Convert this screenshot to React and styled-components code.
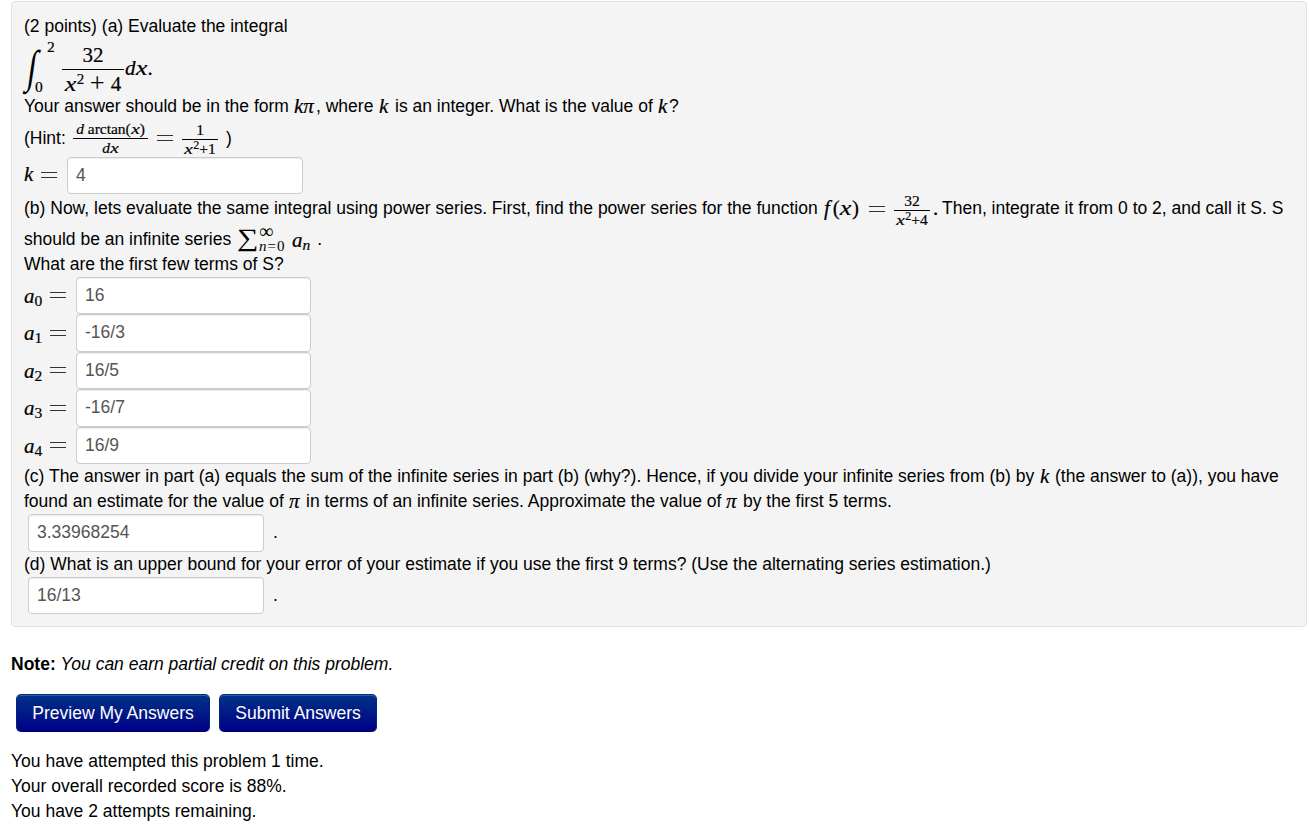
import React from "react";
import styled, { createGlobalStyle } from "styled-components";

const GlobalStyle = createGlobalStyle`
  * {
    box-sizing: border-box;
  }
  body {
    margin: 0;
    background: #fff;
    color: #000;
    font-family: "Liberation Sans", Arial, sans-serif;
    font-size: 17.5px;
    line-height: 25px;
  }
`;

const terms = [
  { n: 0, value: "16" },
  { n: 1, value: "-16/3" },
  { n: 2, value: "16/5" },
  { n: 3, value: "-16/7" },
  { n: 4, value: "16/9" },
];

export default function App() {
  return (
    <Page>
      <GlobalStyle />
      <Problem>
        <Line>(2 points) (a) Evaluate the integral</Line>

        <Line $h={55}>
          <IntegralSign>∫</IntegralSign>
          <Limits>
            <span>2</span>
            <span>0</span>
          </Limits>
          <BigFraction>
            <Num>32</Num>
            <Den>
              <Var>x</Var>
              <Sup>2</Sup>
              <Plus>+</Plus>4
            </Den>
          </BigFraction>
          <Math $l={1} $t={4}>
            <i>d</i>
            <Var>x</Var>.
          </Math>
        </Line>

        <Line>
          <Text $w={270}>Your answer should be in the form</Text>
          <Math $w={22}>
            <i>kπ</i>
          </Math>
          <Text $w={63}>, where</Text>
          <Math $w={16}>
            <i>k</i>
          </Math>
          <Text $w={263}>is an integer. What is the value of</Text>
          <Math $w={11}>
            <i>k</i>
          </Math>
          ?
        </Line>

        <Line $h={38}>
          <Text $w={49}>(Hint:</Text>
          <Fraction $w={75}>
            <Num>
              <i>d</i> arctan(<Var>x</Var>)
            </Num>
            <Den>
              <i>d</i>
              <Var>x</Var>
            </Den>
          </Fraction>
          <Equals $l={9} $r={9} />
          <Fraction $w={36} $t={3}>
            <Num>1</Num>
            <Den>
              <Var>x</Var>
              <Sup $small>2</Sup>+1
            </Den>
          </Fraction>
          <Text $l={8}>)</Text>
        </Line>

        <Line $h={36.5}>
          <Math $w={17}>
            <i>k</i>
          </Math>
          <Equals $r={10} />
          <Answer defaultValue="4" />
        </Line>

        <Line $h={30} $b={3}>
          <Text $w={799}>
            (b) Now, lets evaluate the same integral using power series. First,
            find the power series for the function
          </Text>
          <Math $w={46}>
            <Func>f</Func>(<Var>x</Var>)
          </Math>
          <Equals $r={9} />
          <Fraction $w={36} $t={3}>
            <Num>32</Num>
            <Den>
              <Var>x</Var>
              <Sup $small>2</Sup>+4
            </Den>
          </Fraction>
          <Math $l={3} $w={9}>
            .
          </Math>
          <Text>Then, integrate it from 0 to 2, and call it S. S</Text>
        </Line>

        <Line>
          <Text $w={213}>should be an infinite series</Text>
          <SumSign>∑</SumSign>
          <SumLimits>
            <Infinity>∞</Infinity>
            <LowerLimit>
              <i>n</i>=0
            </LowerLimit>
          </SumLimits>
          <Math $t={2}>
            <i>a</i>
            <Sub>
              <i>n</i>
            </Sub>
          </Math>
          <Text $l={7}>.</Text>
        </Line>
        <Line>What are the first few terms of S?</Line>

        {terms.map((term) => (
          <Line $h={37.5} key={term.n}>
            <Math $w={26} $t={2}>
              <i>a</i>
              <Sub>{term.n}</Sub>
            </Math>
            <Equals $r={10} />
            <Answer $w={235} defaultValue={term.value} />
          </Line>
        ))}

        <Line>
          <Text $w={1016}>
            (c) The answer in part (a) equals the sum of the infinite series in
            part (b) (why?). Hence, if you divide your infinite series from (b)
            by
          </Text>
          <Math $w={15}>
            <i>k</i>
          </Math>
          <Text>(the answer to (a)), you have</Text>
        </Line>
        <Line>
          <Text $w={265}>found an estimate for the value of</Text>
          <Math $w={17}>
            <i>π</i>
          </Math>
          <Text $w={420}>
            in terms of an infinite series. Approximate the value of
          </Text>
          <Math $w={17}>
            <i>π</i>
          </Math>
          <Text>by the first 5 terms.</Text>
        </Line>
        <Line $h={37.5}>
          <Answer $l={4} defaultValue="3.33968254" />
          <Text $l={9}>.</Text>
        </Line>

        <Line>
          (d) What is an upper bound for your error of your estimate if you use
          the first 9 terms? (Use the alternating series estimation.)
        </Line>
        <Line $h={37.5}>
          <Answer $l={4} defaultValue="16/13" />
          <Text $l={9}>.</Text>
        </Line>
      </Problem>

      <Note>
        <b>Note:</b> <i>You can earn partial credit on this problem.</i>
      </Note>

      <Buttons>
        <Button $w={194}>Preview My Answers</Button>
        <Button $w={158}>Submit Answers</Button>
      </Buttons>

      <Score>
        You have attempted this problem 1 time.
        <br />
        Your overall recorded score is 88%.
        <br />
        You have 2 attempts remaining.
      </Score>
    </Page>
  );
}

const Page = styled.div`
  width: 1310px;
  height: 836px;
  padding: 1px 3px 0 11px;
  overflow: hidden;
`;
const Problem = styled.section`
  height: 626px;
  padding: 12px;
  background: #f4f4f4;
  border: 1px solid #e2e2e2;
  border-radius: 4px;
`;
const Line = styled.div`
  display: flex;
  align-items: center;
  height: ${(p) => p.$h || 25}px;
  margin-bottom: ${(p) => p.$b || 0}px;
  white-space: nowrap;
`;
const Text = styled.span`
  flex: none;
  width: ${(p) => (p.$w ? p.$w + "px" : "auto")};
  margin-left: ${(p) => p.$l || 0}px;
`;
const Math = styled.span`
  flex: none;
  width: ${(p) => (p.$w ? p.$w + "px" : "auto")};
  margin-top: ${(p) => p.$t || -1}px;
  margin-left: ${(p) => p.$l || 0}px;
  font-family: "Liberation Serif", "Times New Roman", serif;
  font-size: 21px;
  line-height: 25px;
  -webkit-text-stroke: 0.2px #000;
`;
/* wide italic letter */
const Var = styled.i`
  display: inline-block;
  margin: 0 0.07em 0 0.06em;
  line-height: 1;
  transform: scaleX(1.25);
`;
const Func = styled.i`
  padding: 0 3px 0 1px;
`;
const Plus = styled.span`
  display: inline-block;
  margin: 0 7px;
  font-size: 22px;
  line-height: 1;
  -webkit-text-stroke: 0;
  transform: scale(1.2);
`;
const Sup = styled.sup`
  font-size: ${(p) => (p.$small ? 12 : 15)}px;
  line-height: 0;
  vertical-align: ${(p) => (p.$small ? 5 : 7)}px;
`;
const Sub = styled.sub`
  font-size: 15.5px;
  line-height: 0;
  vertical-align: -3px;
`;
const IntegralSign = styled.span`
  width: 17px;
  font-family: "Liberation Serif", serif;
  font-size: 38px;
  line-height: 50px;
  transform: translate(3px, -1px) skewX(-8deg) scale(0.85, 1.2);
`;
const Limits = styled.span`
  display: flex;
  flex-direction: column;
  justify-content: space-between;
  width: 21px;
  height: 55px;
  font-family: "Liberation Serif", serif;
  font-size: 15.5px;
  line-height: 15px;
  -webkit-text-stroke: 0.2px #000;
  span:first-child {
    padding-left: 6px;
  }
  span:last-child {
    margin-left: -6px;
  }
`;
const Fraction = styled.span`
  display: flex;
  flex: none;
  flex-direction: column;
  align-items: center;
  width: ${(p) => p.$w}px;
  margin-top: ${(p) => p.$t || 0}px;
  font-family: "Liberation Serif", serif;
  font-size: 15.5px;
  line-height: 18px;
  -webkit-text-stroke: 0.2px #000;
`;
const Num = styled.span`
  width: 100%;
  border-bottom: 1px solid #000;
  text-align: center;
`;
const Den = styled.span`
  text-align: center;
`;
const BigFraction = styled(Fraction)`
  width: 62px;
  margin-top: 7px;
  font-size: 21px;
  line-height: 29px;
  ${Num} {
    line-height: 27px;
  }
`;
const Equals = styled.span`
  flex: none;
  width: 16px;
  height: 6px;
  margin-left: ${(p) => p.$l || 0}px;
  margin-right: ${(p) => p.$r || 0}px;
  border: solid #333;
  border-width: 1px 0;
`;
const SumSign = styled.span`
  width: 22px;
  font-family: "Liberation Serif", serif;
  font-size: 25px;
  line-height: 25px;
  transform: translateY(-2px) scaleX(1.2);
  transform-origin: left;
`;
const SumLimits = styled.span`
  display: flex;
  flex-direction: column;
  width: 33px;
  font-family: "Liberation Serif", serif;
  font-size: 15px;
  line-height: 15px;
`;
const Infinity = styled.span`
  font-size: 20px;
`;
const LowerLimit = styled.span`
  letter-spacing: 1px;
`;
const Answer = styled.input`
  flex: none;
  width: ${(p) => p.$w || 236}px;
  height: 37.5px;
  margin: 0 0 0 ${(p) => p.$l || 0}px;
  padding: 5px 8px;
  border: 1px solid #ccc;
  border-radius: 4px;
  background: #fff;
  box-shadow: inset 0 1px 1px rgba(0, 0, 0, 0.075);
  color: #555;
  font: 17.5px/25px "Liberation Sans", Arial, sans-serif;
`;
const Note = styled.p`
  margin: 25px 0 17px;
`;
const Buttons = styled.div`
  display: flex;
  gap: 9px;
  padding-left: 5px;
`;
const Button = styled.button`
  width: ${(p) => p.$w}px;
  height: 38px;
  padding: 0;
  border: 1px solid #007;
  border-color: #003080 #00257a #006;
  border-radius: 5px;
  background: linear-gradient(#038, #008);
  box-shadow: inset 0 1px 0 rgba(255, 255, 255, 0.2);
  color: #fff;
  font: 17.5px/25px "Liberation Sans", Arial, sans-serif;
  text-shadow: 0 -1px 0 rgba(0, 0, 0, 0.25);
`;
const Score = styled.p`
  margin: 17px 0 0;
`;
